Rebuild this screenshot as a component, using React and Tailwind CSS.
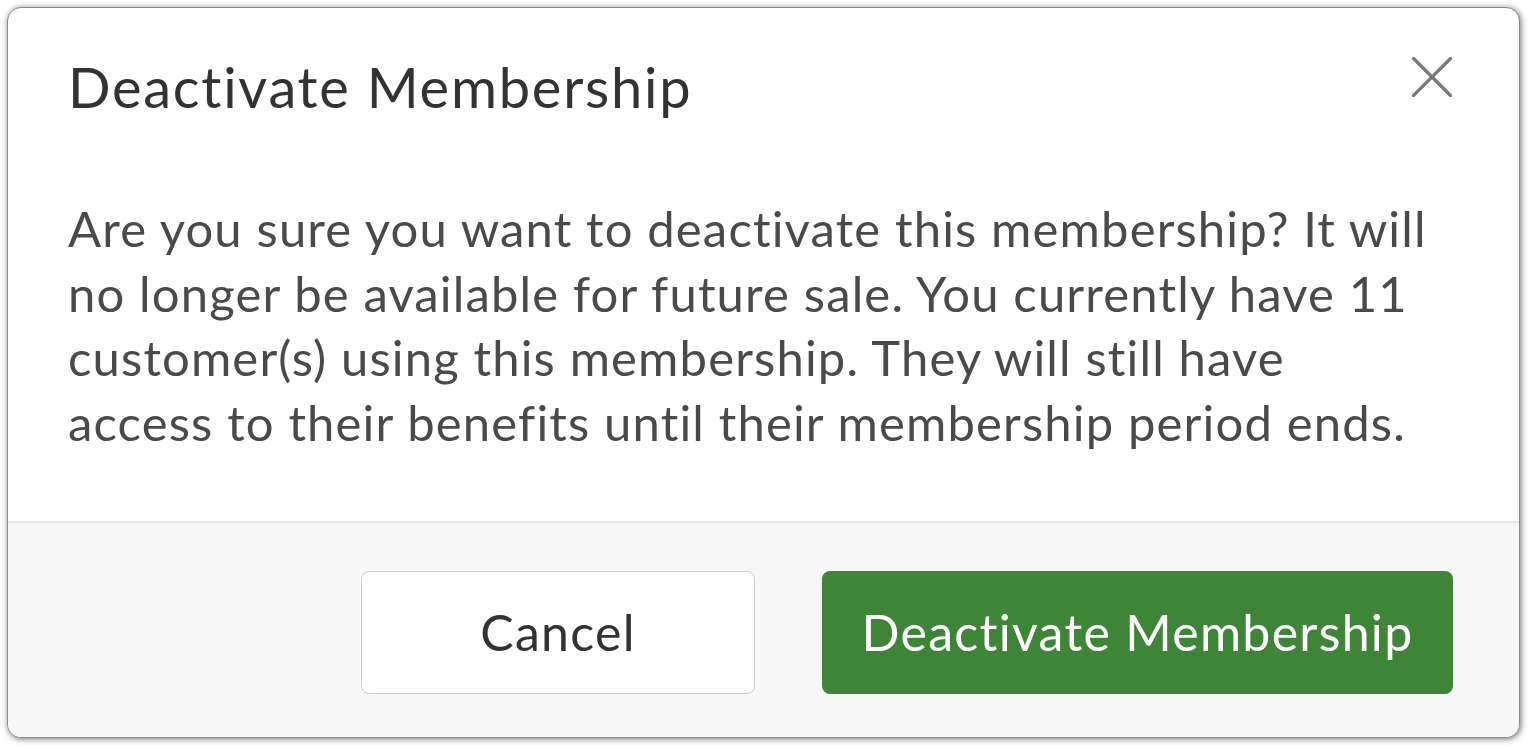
export default function App() {
  return (
    <div className="w-[1529px] h-[747px] bg-white p-[7px] [font-variant-ligatures:none]" style={{ fontFamily: "Lato, 'Open Sans', sans-serif" }}>
      <div className="relative flex h-[731px] w-[1513px] flex-col overflow-hidden rounded-[14px] border border-[#8a8a8a] bg-white shadow-[1px_1px_6px_rgba(0,0,0,0.55)]">
        <button className="absolute right-[67px] top-[49px] flex h-[40px] w-[40px] items-center justify-center" aria-label="Close">
          <svg width="40" height="40" viewBox="0 0 40 40" fill="none" stroke="#777777" strokeWidth="3.2" strokeLinecap="square">
            <path d="M1.5 1.5 L38.5 38.5 M38.5 1.5 L1.5 38.5" />
          </svg>
        </button>
        <div className="flex-1 pl-[60px] pr-[82px] pt-[45px]">
          <h2 className="text-[56px] leading-[67px] font-normal tracking-[1.75px] text-[#333333]">Deactivate Membership</h2>
          <p className="mt-[76px] text-[49px] leading-[64.5px] tracking-[1.15px] text-[#4a4a4a]">
            Are you sure you want to deactivate this membership? It will no longer be available for future sale. You currently have 11 customer(s) using this membership. They will still have access to their benefits until their membership period ends.
          </p>
        </div>
        <div className="flex h-[216px] items-start justify-end gap-[67px] border-t-2 border-[#e6e6e6] bg-[#f7f7f7] pr-[66px] pt-[48px]">
          <button className="flex h-[123px] w-[394px] items-center justify-center rounded-[8px] border border-[#cccccc] bg-white text-[50px] tracking-[1.3px] text-[#333333]">
            Cancel
          </button>
          <button className="flex h-[123px] w-[631px] items-center justify-center rounded-[8px] bg-[#3e8538] text-[50px] tracking-[1.3px] text-white">
            Deactivate Membership
          </button>
        </div>
      </div>
    </div>
  );
}
